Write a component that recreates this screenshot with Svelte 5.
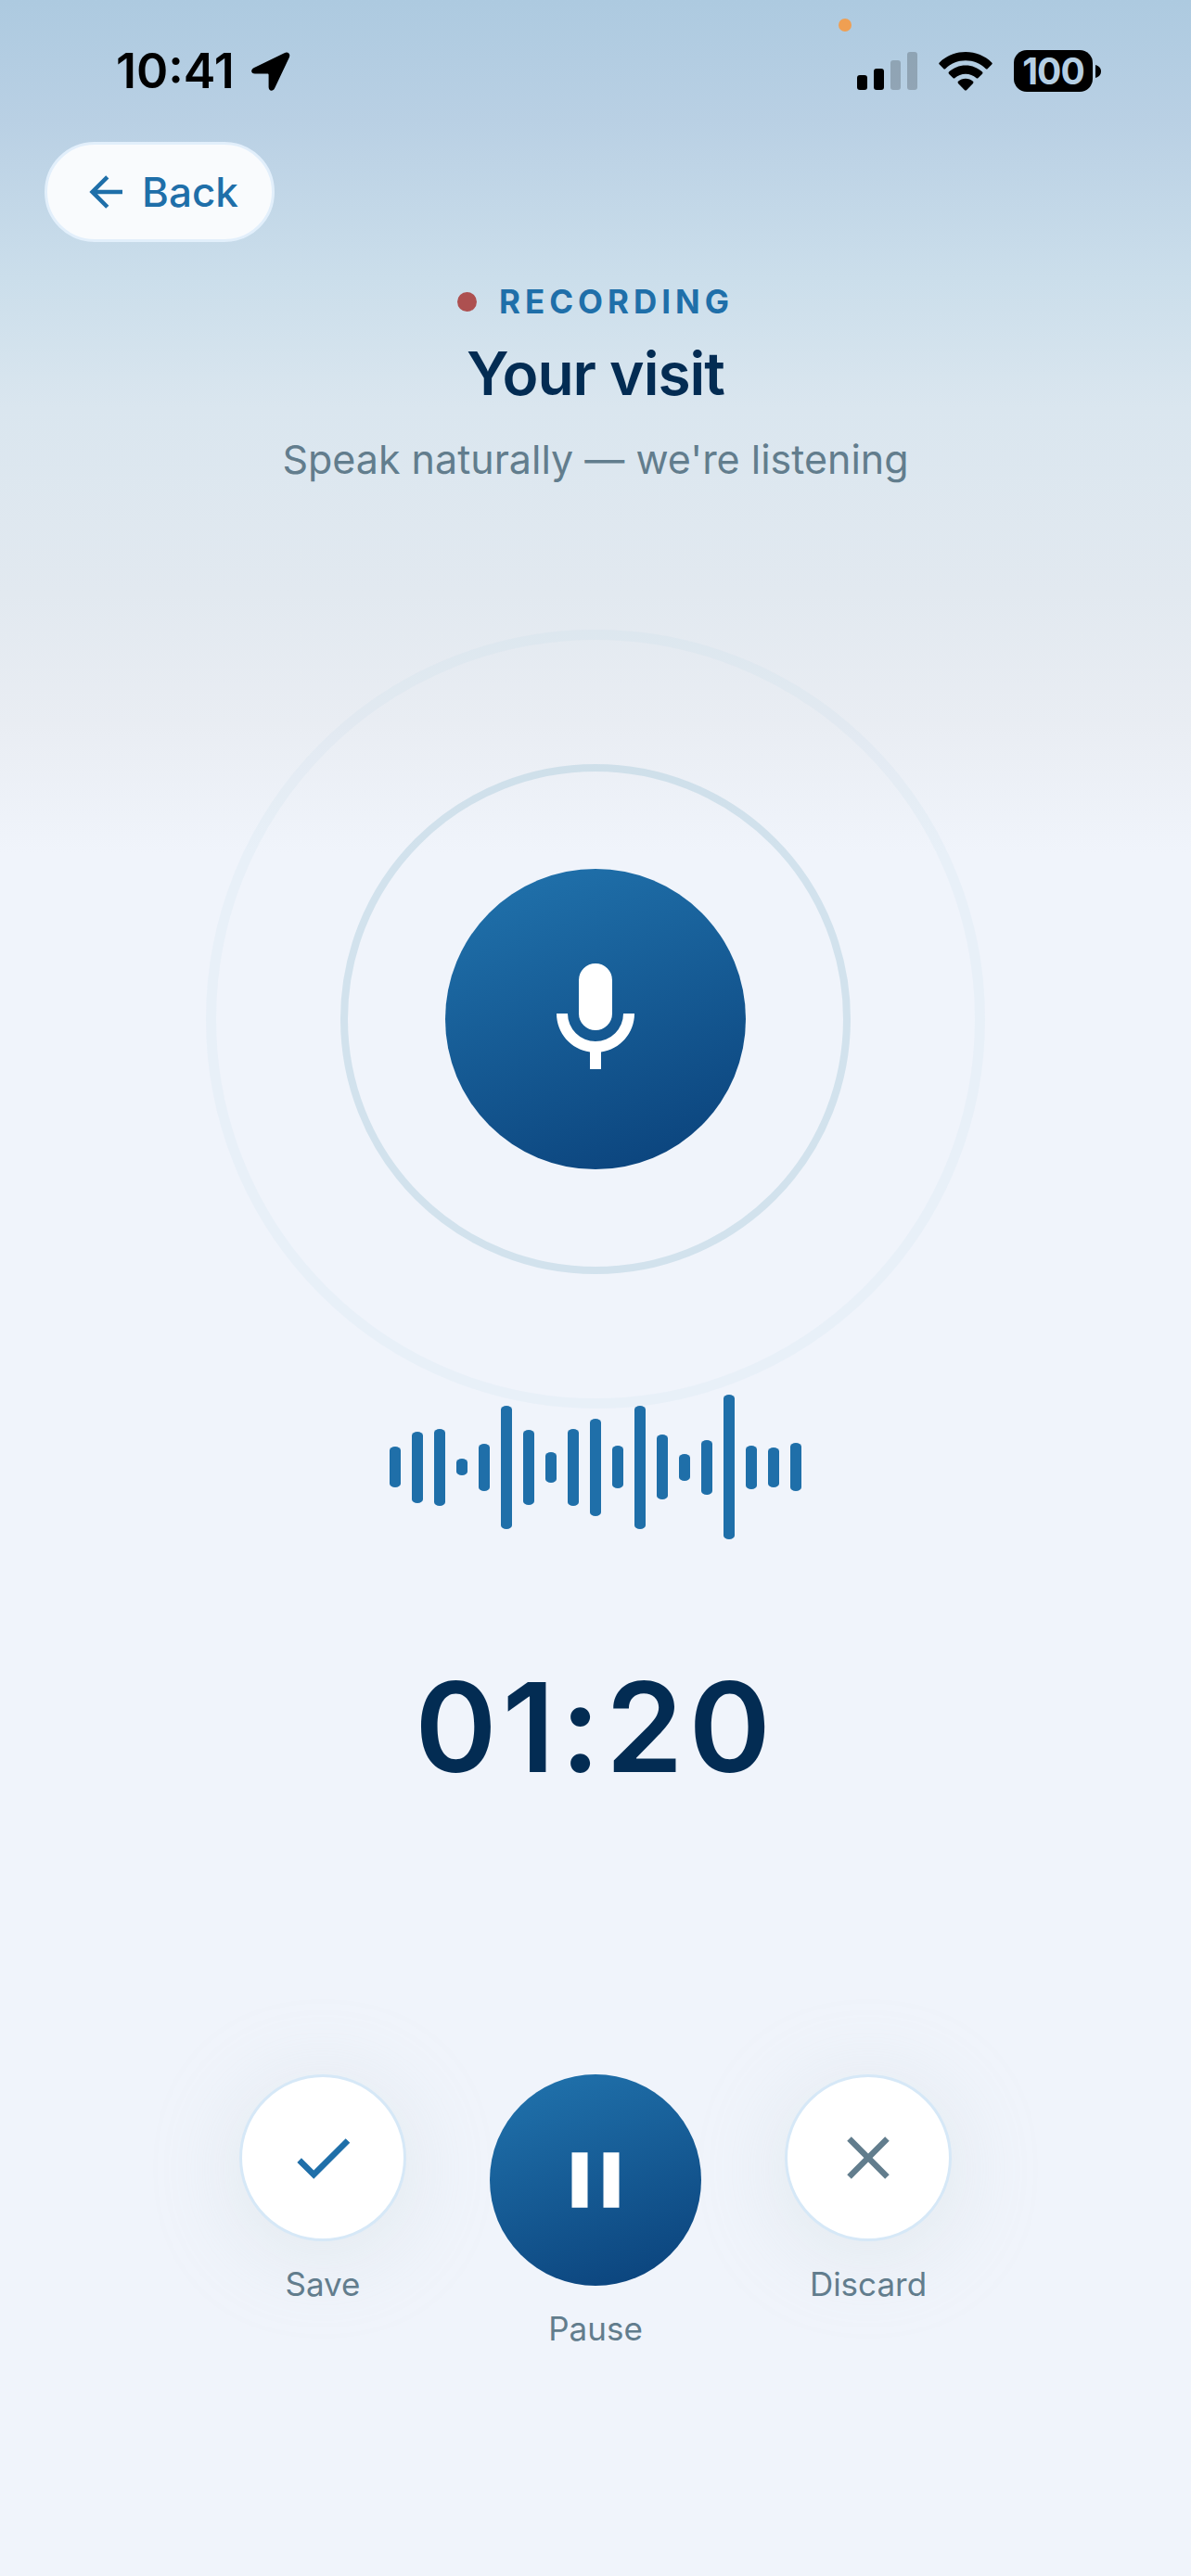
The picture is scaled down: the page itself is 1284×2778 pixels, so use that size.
<svelte:options runes={true} />

<script lang="ts">
  type Action = {
    id: string;
    label: string;
    path: string;
    primary?: boolean;
  };

  const ICONS = {
    arrowLeft: "M20,11V13H8L13.5,18.5L12.08,19.92L4.16,12L12.08,4.08L13.5,5.5L8,11H20Z",
    microphone:
      "M12,2A3,3 0 0,1 15,5V11A3,3 0 0,1 12,14A3,3 0 0,1 9,11V5A3,3 0 0,1 12,2M19,11C19,14.53 16.39,17.44 13,17.93V21H11V17.93C7.61,17.44 5,14.53 5,11H7A5,5 0 0,0 12,16A5,5 0 0,0 17,11H19Z",
    check: "M21,7L9,19L3.5,13.5L4.91,12.09L9,16.17L19.59,5.59L21,7Z",
    pause: "M14,19H18V5H14M6,19H10V5H6V19Z",
    play: "M8,5.14V19.14L19,12.14L8,5.14Z",
    close:
      "M19,6.41L17.59,5L12,10.59L6.41,5L5,6.41L10.59,12L5,17.59L6.41,19L12,13.41L17.59,19L19,17.59L13.41,12L19,6.41Z",
  };

  let {
    levels = [44, 77, 83, 18, 51, 133, 81, 33, 83, 105, 46, 133, 70, 29, 59, 156, 47, 43, 52],
    seconds = 80,
    onback,
    onsave,
    ondiscard,
  }: {
    levels?: number[];
    seconds?: number;
    onback?: () => void;
    onsave?: () => void;
    ondiscard?: () => void;
  } = $props();

  let paused = $state(false);

  let time = $derived.by(() => {
    const m = String(Math.floor(seconds / 60)).padStart(2, "0");
    const s = String(seconds % 60).padStart(2, "0");
    return `${m}:${s}`;
  });

  let actions = $derived<Action[]>([
    { id: "save", label: "Save", path: ICONS.check },
    {
      id: "pause",
      label: paused ? "Resume" : "Pause",
      path: paused ? ICONS.play : ICONS.pause,
      primary: true,
    },
    { id: "discard", label: "Discard", path: ICONS.close },
  ]);

  function handleAction(id: string) {
    if (id === "pause") paused = !paused;
    if (id === "save") onsave?.();
    if (id === "discard") ondiscard?.();
  }
</script>

<div class="screen">
  <div class="status">
    <div class="status__left">
      <span class="status__time">10:41</span>
      <svg class="status__location" viewBox="0 0 42 42" aria-hidden="true">
        <path
          d="M35.5 1.2 3 17C-1.300 19.200-.6 23.500 4 23.500H17.200C18.200 23.500 18.600 23.900 18.600 24.900V38C18.600 42.500 23.500 43 25.200 39L40.800 6C42.500 2 39.500-.6 35.500 1.200Z"
        />
      </svg>
    </div>
    <div class="status__right">
      <span class="status__mic-dot"></span>
      <svg class="status__cell" viewBox="0 0 65 41" aria-hidden="true">
        <rect x="0" y="25" width="11" height="16" rx="3" />
        <rect x="18" y="18" width="11" height="23" rx="3" />
        <rect x="36" y="9" width="11" height="32" rx="3" opacity="0.2" />
        <rect x="54" y="0" width="11" height="41" rx="3" opacity="0.2" />
      </svg>
      <svg class="status__wifi" viewBox="0 0 58 42" aria-hidden="true">
        <path
          d="M29 0C40 0 50 4.300 57.200 11.400Q58.300 12.500 57.200 13.600L52.800 18Q51.800 19 50.600 18C45 12.600 37.400 9.300 29 9.300S13 12.600 7.400 18Q6.200 19 5.200 18L.8 13.600Q-.3 12.500.8 11.400C8 4.300 18 0 29 0Z"
        />
        <path
          d="M29 14.500C36 14.500 42.300 17.200 47 21.600Q48 22.600 47 23.700L42.600 28.100Q41.500 29.100 40.400 28.100C37.400 25.400 33.400 23.800 29 23.800S20.600 25.400 17.600 28.100Q16.500 29.100 15.400 28.100L11 23.700Q10 22.600 11 21.600C15.700 17.200 22 14.500 29 14.500Z"
        />
        <path
          d="M29 28.800C32 28.800 34.800 29.900 37 31.700Q38 32.800 37 33.900L30.200 40.900Q29 42 27.800 40.900L21 33.900Q20 32.800 21 31.700C23.200 29.900 26 28.800 29 28.800Z"
        />
      </svg>
      <span class="battery">
        <span class="battery__level">100</span>
        <svg class="battery__cap" viewBox="0 0 6 14" aria-hidden="true">
          <path d="M0 0C3.500 1 6 3.500 6 7S3.500 13 0 14Z" />
        </svg>
      </span>
    </div>
  </div>

  <nav class="nav">
    <button class="back" type="button" onclick={() => onback?.()}>
      <svg class="back__icon" viewBox="0 0 24 24" aria-hidden="true">
        <path d={ICONS.arrowLeft} />
      </svg>
      Back
    </button>
  </nav>

  <header class="header">
    <p class="header__eyebrow">
      <span class="header__dot"></span>
      RECORDING
    </p>
    <h1 class="header__title">Your visit</h1>
    <p class="header__subtitle">Speak naturally — we're listening</p>
  </header>

  <main class="recorder">
    <div class="mic">
      <span class="mic__ring mic__ring--outer"></span>
      <span class="mic__ring mic__ring--inner"></span>
      <span class="mic__disc">
        <svg class="mic__icon" viewBox="0 0 24 24" aria-hidden="true">
          <path d={ICONS.microphone} />
        </svg>
      </span>
    </div>

    <div class="wave" aria-hidden="true">
      {#each levels as level}
        <span class="wave__bar" style:height="{level}px"></span>
      {/each}
    </div>

    <div class="timer" role="timer">{time}</div>
  </main>

  <div class="controls">
    {#each actions as action (action.id)}
      <div class="control">
        <button
          class="control__button control__button--{action.id}"
          class:control__button--primary={action.primary}
          type="button"
          aria-labelledby="label-{action.id}"
          onclick={() => handleAction(action.id)}
        >
          <svg class="control__icon" viewBox="0 0 24 24" aria-hidden="true">
            <path d={action.path} />
          </svg>
        </button>
        <span class="control__label" id="label-{action.id}">{action.label}</span>
      </div>
    {/each}
  </div>
</div>

<style>
  :global(body) {
    background: #f0f4fc;
  }

  .screen {
    --blue: #1f6fa9;
    --navy: #032c53;
    --muted: #627d8d;
    --line: #d6e8f7;
    --disc: linear-gradient(160deg, #1f6fa9 10%, #0b437c 95%);

    box-sizing: border-box;
    min-height: 100vh;
    display: flex;
    flex-direction: column;
    overflow: hidden;
    background: linear-gradient(
        #adcae0 0,
        #b9d0e4 130px,
        #cbdeeb 300px,
        #dae6ef 440px,
        #e2e9f0 640px,
        #e9edf3 780px,
        #f0f4fb 920px
      )
      #f0f4fc;
    font-family: Inter, "Liberation Sans", sans-serif;
    color: var(--navy);
  }

  svg {
    display: block;
    fill: currentColor;
  }

  .status {
    display: flex;
    justify-content: space-between;
    align-items: center;
    flex-shrink: 0;
    height: 153px;
    padding: 0 97px 0 125px;
    color: #000;
  }

  .status__left,
  .status__right {
    display: flex;
    align-items: center;
  }

  .status__left {
    gap: 18px;
  }

  .status__right {
    position: relative;
    gap: 23px;
  }

  .status__time {
    font-size: 52px;
    line-height: 60px;
    font-weight: 600;
  }

  .status__location {
    width: 42px;
    height: 42px;
  }

  .status__mic-dot {
    position: absolute;
    left: -20px;
    top: -34px;
    width: 14px;
    height: 14px;
    border-radius: 50%;
    background: #ef9f52;
  }

  .status__cell {
    width: 65px;
    height: 41px;
  }

  .status__wifi {
    width: 58px;
    height: 42px;
  }

  .battery {
    display: flex;
    align-items: center;
    gap: 3px;
  }

  .battery__level {
    width: 85px;
    border-radius: 14px;
    background: #000;
    color: #b5cfe3;
    font-size: 39px;
    line-height: 45px;
    font-weight: 700;
    text-align: center;
    letter-spacing: -1px;
  }

  .battery__cap {
    width: 6px;
    height: 14px;
  }

  .nav {
    padding: 0 48px;
  }

  .back {
    display: flex;
    align-items: center;
    gap: 12px;
    height: 108px;
    padding: 0 36px;
    border: 3px solid #e2effb;
    border-radius: 54px;
    background: #f9fbfd;
    color: var(--blue);
    font: inherit;
    font-size: 44px;
    font-weight: 500;
    cursor: pointer;
  }

  .back__icon {
    width: 54px;
    height: 54px;
  }

  .header {
    display: flex;
    flex-direction: column;
    align-items: center;
    padding: 42px 48px 0;
    text-align: center;
  }

  .header__eyebrow {
    display: flex;
    align-items: center;
    gap: 24px;
    margin: 0;
    color: var(--blue);
    font-size: 35px;
    line-height: 44px;
    font-weight: 700;
    letter-spacing: 5px;
  }

  .header__dot {
    width: 21px;
    height: 21px;
    border-radius: 50%;
    background: #ad5050;
  }

  .header__title {
    margin: 16px 0 0;
    font-size: 64px;
    line-height: 80px;
    font-weight: 600;
    letter-spacing: -1px;
  }

  .header__subtitle {
    margin: 24px 0 0;
    color: var(--muted);
    font-size: 43px;
    line-height: 56px;
  }

  .recorder {
    display: flex;
    flex-direction: column;
    align-items: center;
    padding-top: 414px;
  }

  .mic {
    position: relative;
    width: 324px;
    height: 324px;
  }

  .mic__ring {
    position: absolute;
    border-style: solid;
    border-radius: 50%;
  }

  .mic__ring--outer {
    inset: -258px;
    border-width: 11px;
    border-color: rgba(170, 208, 225, 0.1);
  }

  .mic__ring--inner {
    inset: -113px;
    border-width: 8px;
    border-color: rgba(172, 205, 220, 0.45);
  }

  .mic__disc {
    display: flex;
    align-items: center;
    justify-content: center;
    height: 100%;
    border-radius: 50%;
    background: var(--disc);
    color: #fff;
  }

  .mic__icon {
    width: 144px;
    height: 144px;
  }

  .wave {
    position: relative;
    display: flex;
    align-items: center;
    gap: 12px;
    height: 168px;
    margin-top: 237px;
  }

  .wave__bar {
    width: 12px;
    border-radius: 6px / 4px;
    background: var(--blue);
  }

  .timer {
    margin-top: 116px;
    font-size: 134px;
    line-height: 160px;
    font-weight: 600;
    letter-spacing: 6px;
  }

  .controls {
    display: flex;
    justify-content: center;
    align-items: flex-start;
    gap: 90px;
    padding: 295px 48px 120px;
  }

  .control {
    display: flex;
    flex-direction: column;
    align-items: center;
    gap: 24px;
  }

  .control__button {
    display: flex;
    align-items: center;
    justify-content: center;
    box-sizing: border-box;
    width: 180px;
    height: 180px;
    padding: 0;
    border: 3px solid var(--line);
    border-radius: 50%;
    background: #fff;
    color: var(--blue);
    box-shadow: 0 12px 96px rgba(190, 205, 205, 0.3);
    cursor: pointer;
  }

  .control__button--discard {
    color: var(--muted);
  }

  .control__button--primary {
    width: 228px;
    height: 228px;
    border: none;
    background: var(--disc);
    color: #fff;
    box-shadow: none;
  }

  .control__icon {
    width: 78px;
    height: 78px;
  }

  .control__button--primary .control__icon {
    width: 102px;
    height: 102px;
  }

  .control__label {
    position: relative;
    width: 180px;
    color: var(--muted);
    font-size: 35px;
    line-height: 44px;
    text-align: center;
  }

  button:focus-visible {
    outline: 4px solid var(--blue);
    outline-offset: 4px;
  }
</style>
